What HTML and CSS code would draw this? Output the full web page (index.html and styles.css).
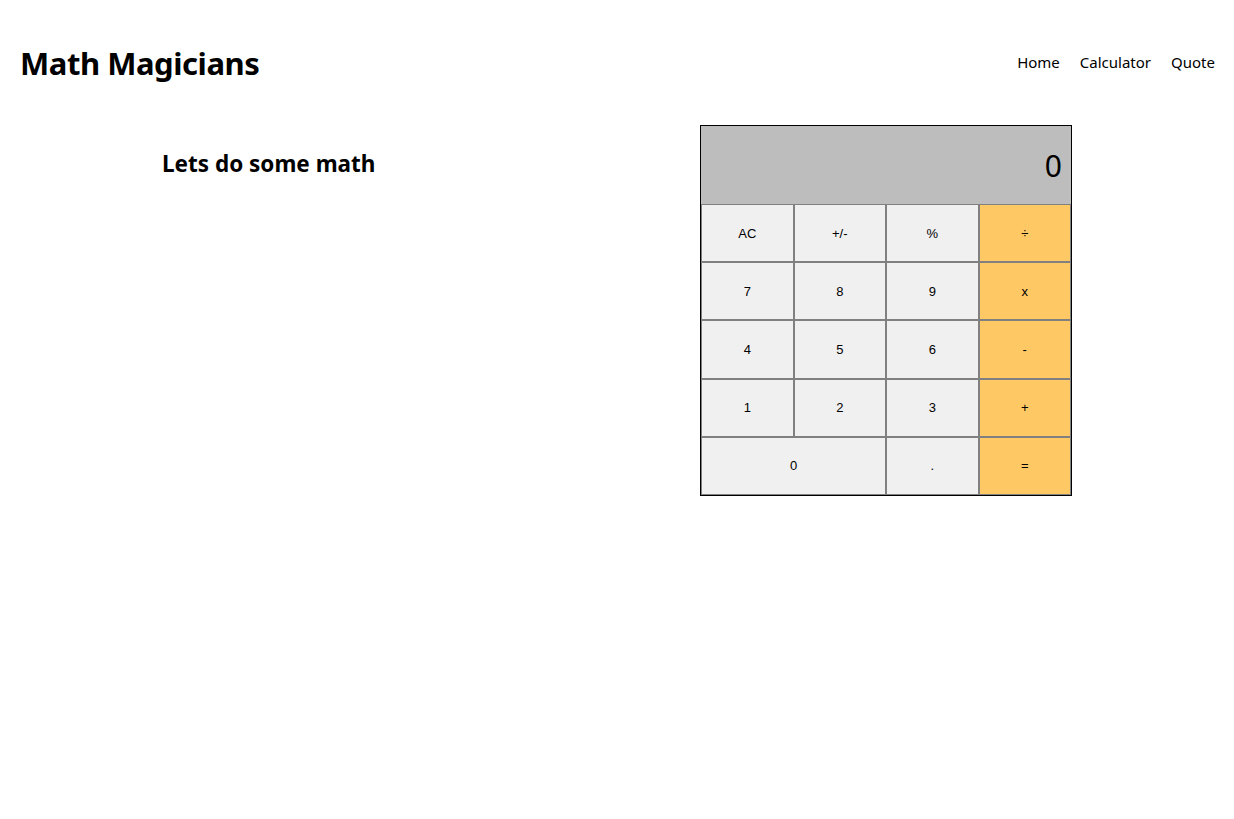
FILE: index.html
```html
<!DOCTYPE html>
<html lang="en">
<head>
<meta charset="utf-8">
<title>Math Magicians</title>
<link rel="stylesheet" href="styles.css">
</head>
<body>
<header class="header">
  <h1 class="logo">Math Magicians</h1>
  <nav class="nav">
    <a href="#" class="nav-link">Home</a>
    <a href="#" class="nav-link">Calculator</a>
    <a href="#" class="nav-link">Quote</a>
  </nav>
</header>
<main class="main">
  <section class="intro">
    <h2 class="intro-title">Lets do some math</h2>
  </section>
  <div class="calc">
    <div class="display">0</div>
    <div class="keys">
      <button class="key">AC</button>
      <button class="key">+/-</button>
      <button class="key">%</button>
      <button class="key op">÷</button>
      <button class="key">7</button>
      <button class="key">8</button>
      <button class="key">9</button>
      <button class="key op">x</button>
      <button class="key">4</button>
      <button class="key">5</button>
      <button class="key">6</button>
      <button class="key op">-</button>
      <button class="key">1</button>
      <button class="key">2</button>
      <button class="key">3</button>
      <button class="key op">+</button>
      <button class="key zero">0</button>
      <button class="key">.</button>
      <button class="key op">=</button>
    </div>
  </div>
</main>
</body>
</html>
```
FILE: styles.css
```css
* { box-sizing: border-box; }
body {
  margin: 0;
  font-family: "Noto Sans", "Open Sans", sans-serif;
  color: #000;
  background: #fff;
}
.header {
  display: flex;
  align-items: center;
  justify-content: space-between;
  margin-top: 43px;
  height: 40px;
  padding: 0 19px 0 20px;
}
.logo {
  margin: 0;
  font-size: 31px;
  line-height: 40px;
  font-weight: 700;
  letter-spacing: -0.45px;
}
.nav {
  display: flex;
  gap: 20px;
  margin-top: -2px;
}
.nav-link {
  color: #000;
  text-decoration: none;
  font-size: 15px;
}
.main {
  display: flex;
  margin-top: 42px;
  padding-left: 162px;
}
.intro {
  width: 538px;
}
.intro-title {
  margin: 23px 0 0;
  font-size: 22.5px;
  line-height: 32px;
  font-weight: 700;
}
.calc {
  width: 372px;
  border: 1px solid #000;
}
.display {
  height: 78px;
  background: #bdbdbd;
  display: flex;
  align-items: center;
  justify-content: flex-end;
  padding-right: 9px;
  font-size: 30px;
}
.keys {
  display: grid;
  grid-template-columns: repeat(4, 1fr);
  grid-auto-rows: 58.2px;
}
.key {
  margin: 0;
  border: 1px solid #808080;
  background: #f0f0f0;
  font-family: "Liberation Sans", Arial, sans-serif;
  font-size: 13px;
  color: #000;
  padding: 0;
}
.key.op {
  background: #fec865;
}
.key.zero {
  grid-column: span 2;
}
```
